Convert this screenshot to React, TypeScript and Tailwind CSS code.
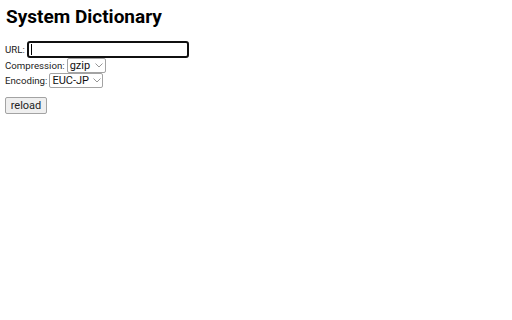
import React from "react";

function Chevron() {
  return (
    <svg width="8" height="5" viewBox="0 0 8 5" className="shrink-0">
      <path d="M0.5 0.5 L4 4 L7.5 0.5" fill="none" stroke="#8a8a8a" strokeWidth="0.9" />
    </svg>
  );
}

export default function App() {
  return (
    <div className="min-h-screen bg-white text-black px-[5px]" style={{ fontFamily: "Roboto, 'Liberation Sans', sans-serif" }}>
      <h1 className="pt-[5px] text-[19px] font-bold leading-[24px] pl-[1px]">System Dictionary</h1>
      <div className="mt-[12px] flex flex-col text-[9.7px] leading-[12px] text-[#222]">
        <div className="flex items-center gap-[2px] h-[17px]">
          <span>URL:</span>
          <div className="w-[162px] h-[17px] border-2 border-[#101010] rounded-[3px] flex items-center pl-[2px]">
            <div className="w-[1px] h-[11px] bg-black" />
          </div>
        </div>
        <div className="flex items-center gap-[2px] h-[15px]">
          <span>Compression:</span>
          <div className="h-[15px] w-[39px] border border-[#a3a3a3] rounded-[2px] flex items-center justify-between pl-[2px] pr-[2px] text-[11px] text-[#111]">
            <span>gzip</span>
            <Chevron />
          </div>
        </div>
        <div className="flex items-center gap-[2px] h-[15px]">
          <span>Encoding:</span>
          <div className="h-[15px] w-[54px] border border-[#a3a3a3] rounded-[2px] flex items-center justify-between pl-[2px] pr-[1px] text-[11px] text-[#111]">
            <span>EUC-JP</span>
            <Chevron />
          </div>
        </div>
        <div className="mt-[9px]">
          <button className="h-[17px] w-[42px] border border-[#a3a3a3] rounded-[2px] bg-[#efefef] text-[11px] leading-[12px] text-[#222]">
            reload
          </button>
        </div>
      </div>
    </div>
  );
}
